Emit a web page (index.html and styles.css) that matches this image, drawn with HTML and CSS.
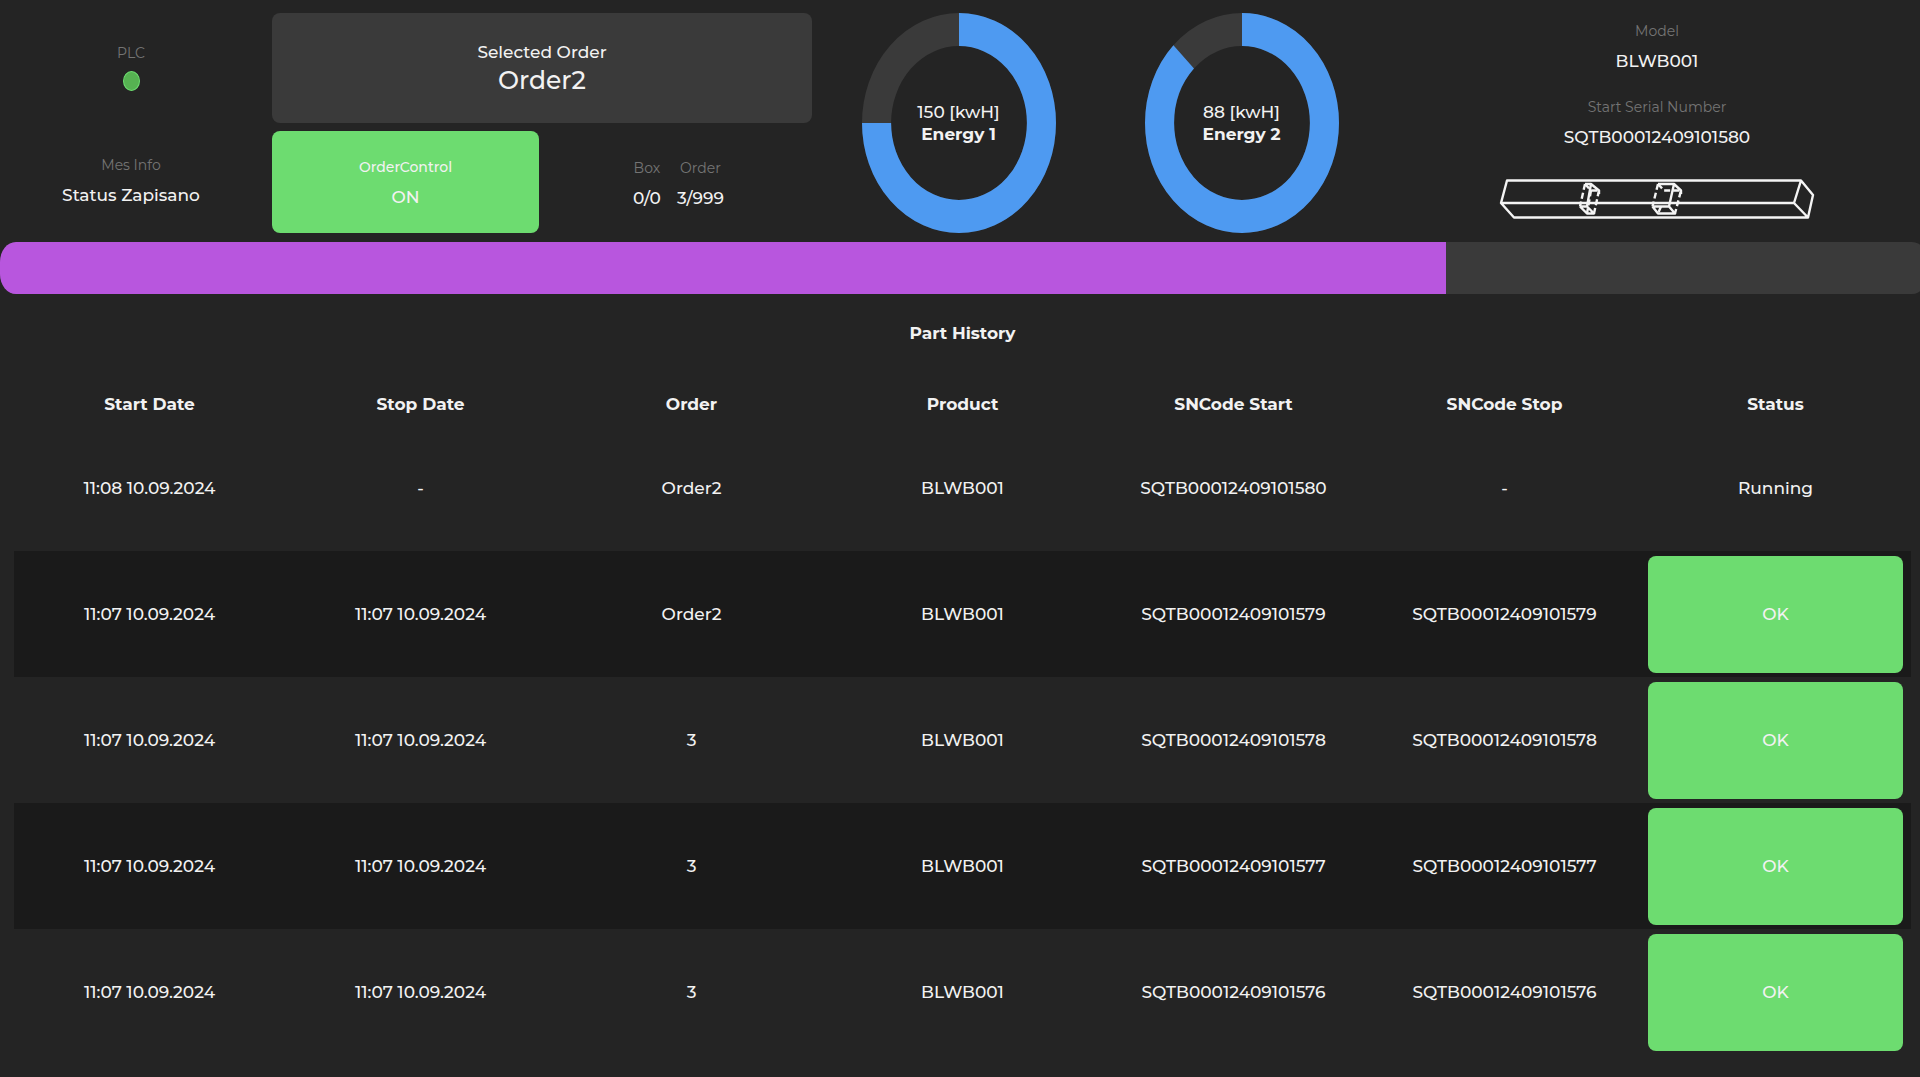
FILE: index.html
```html
<!DOCTYPE html>
<html lang="en">
<head>
<meta charset="utf-8">
<title>Production Line</title>
<meta name="viewport" content="width=device-width, initial-scale=1">
<link rel="stylesheet" href="styles.css">
</head>
<body>
<main class="screen">
  <header class="overview">
    <section class="machine">
      <div class="stat">
        <span class="label">PLC</span>
        <span class="led" role="img" aria-label="Connected"></span>
      </div>
      <div class="stat">
        <span class="label">Mes Info</span>
        <span class="value">Status Zapisano</span>
      </div>
    </section>

    <section class="order">
      <button class="order-card" type="button">
        <span class="order-caption">Selected Order</span>
        <span class="order-name">Order2</span>
      </button>
      <button class="toggle" type="button">
        <span class="toggle-label">OrderControl</span>
        <span class="toggle-state">ON</span>
      </button>
      <div class="counters">
        <div class="stat">
          <span class="label">Box</span>
          <span class="value">0/0</span>
        </div>
        <div class="stat">
          <span class="label">Order</span>
          <span class="value">3/999</span>
        </div>
      </div>
    </section>

    <section class="gauges">
      <div class="gauge">
        <svg class="ring" viewBox="0 0 100 100" preserveAspectRatio="none" aria-hidden="true">
          <circle class="ring-track" cx="50" cy="50" r="42.5"/>
          <circle class="ring-value" cx="50" cy="50" r="42.5" pathLength="100" stroke-dasharray="75 100" transform="rotate(-90 50 50)"/>
        </svg>
        <div class="gauge-text"><span>150 [kwH]</span><strong>Energy 1</strong></div>
      </div>
      <div class="gauge">
        <svg class="ring" viewBox="0 0 100 100" preserveAspectRatio="none" aria-hidden="true">
          <circle class="ring-track" cx="50" cy="50" r="42.5"/>
          <circle class="ring-value" cx="50" cy="50" r="42.5" pathLength="100" stroke-dasharray="87.5 100" transform="rotate(-90 50 50)"/>
        </svg>
        <div class="gauge-text"><span>88 [kwH]</span><strong>Energy 2</strong></div>
      </div>
    </section>

    <section class="model">
      <div class="stat">
        <span class="label">Model</span>
        <span class="value">BLWB001</span>
      </div>
      <div class="stat">
        <span class="label">Start Serial Number</span>
        <span class="value">SQTB00012409101580</span>
      </div>
      <svg class="profile" viewBox="0 0 316 42" aria-label="Profile with two cut-outs" role="img">
        <path d="M8 2.5H302L314 17L309 39.5H15L2 25ZM2 25H295L302 2.5M295 25L309 39.5"/>
        <path class="hole" d="M86 6H92L100 12.5V16M81 28.5H88L95 35.5H88L81 28.5M88 28.5L92 6"/>
        <path class="hidden-edge" d="M86 6L81 28.5M100 12.5L95 35.5M86 6L92 12.5H100M92 12.5L88 35.5"/>
        <path class="hole" d="M159 6H175L182 12.5V16M153.5 28.5H170L176 35.5H159L153.5 28.5M170 28.5L175 6"/>
        <path class="hidden-edge" d="M159 6L153.5 28.5M159 6L165 12.5H182L176 35.5M162 28.5L159 35.5"/>
      </svg>
    </section>
  </header>

  <div class="progress" role="progressbar" aria-label="Order progress" aria-valuenow="75" aria-valuemin="0" aria-valuemax="100">
    <div class="progress-fill" style="width: 75%"></div>
  </div>

  <section class="history">
    <h2 class="history-title">Part History</h2>
    <table class="parts">
      <thead>
        <tr><th>Start Date</th><th>Stop Date</th><th>Order</th><th>Product</th><th>SNCode Start</th><th>SNCode Stop</th><th>Status</th></tr>
      </thead>
      <tbody>
        <tr><td>11:08 10.09.2024</td><td>-</td><td>Order2</td><td>BLWB001</td><td>SQTB00012409101580</td><td>-</td><td>Running</td></tr>
        <tr><td>11:07 10.09.2024</td><td>11:07 10.09.2024</td><td>Order2</td><td>BLWB001</td><td>SQTB00012409101579</td><td>SQTB00012409101579</td><td class="action"><button class="ok" type="button">OK</button></td></tr>
        <tr><td>11:07 10.09.2024</td><td>11:07 10.09.2024</td><td>3</td><td>BLWB001</td><td>SQTB00012409101578</td><td>SQTB00012409101578</td><td class="action"><button class="ok" type="button">OK</button></td></tr>
        <tr><td>11:07 10.09.2024</td><td>11:07 10.09.2024</td><td>3</td><td>BLWB001</td><td>SQTB00012409101577</td><td>SQTB00012409101577</td><td class="action"><button class="ok" type="button">OK</button></td></tr>
        <tr><td>11:07 10.09.2024</td><td>11:07 10.09.2024</td><td>3</td><td>BLWB001</td><td>SQTB00012409101576</td><td>SQTB00012409101576</td><td class="action"><button class="ok" type="button">OK</button></td></tr>
      </tbody>
    </table>
  </section>
</main>
</body>
</html>
```

FILE: styles.css
```css
:root {
  --bg: #242424;
  --row-alt: #1a1a1a;
  --panel: #3a3a3a;
  --text: #f2f2f2;
  --muted: #747474;
  --green: #6ddc70;
  --blue: #4e9af1;
  --purple: #b856de;
}

* {
  box-sizing: border-box;
}

body {
  margin: 0;
  background: var(--bg);
  color: var(--text);
  font-family: Montserrat, Lato, "Open Sans", sans-serif;
  font-size: 17px;
  font-weight: 500;
  line-height: 24px;
}

button {
  border: 0;
  border-radius: 8px;
  color: inherit;
  font: inherit;
  cursor: pointer;
}

.screen {
  min-height: 100vh;
  overflow-x: hidden;
}

.overview {
  display: grid;
  grid-template-columns: 262fr 540fr 556fr 532fr;
  gap: 10px;
  padding-top: 13px;
}

.machine,
.order {
  display: grid;
  gap: 8px;
}

.machine {
  grid-template-rows: 106px 106px;
}

.stat {
  display: flex;
  flex-direction: column;
  align-items: center;
  justify-content: center;
  gap: 6px;
}

.label {
  color: var(--muted);
  font-size: 14px;
  font-weight: 400;
}

.led {
  width: 17px;
  height: 20px;
  border: 1px solid var(--green);
  border-radius: 50%;
  background: #56b252;
}

.order {
  grid-template-rows: 110px 102px;
  grid-template-columns: 1fr 1fr;
  column-gap: 6px;
}

.order-card,
.toggle {
  display: flex;
  flex-direction: column;
  align-items: center;
  justify-content: center;
}

.order-card {
  grid-column: 1 / -1;
  background: var(--panel);
}

.order-name {
  font-size: 25px;
  line-height: 32px;
}

.toggle {
  gap: 6px;
  background: var(--green);
}

.toggle-label {
  font-size: 14px;
}

.counters {
  display: flex;
  justify-content: center;
  gap: 16px;
  padding-top: 2px;
}

.gauges {
  display: grid;
  grid-template-columns: 1fr 1fr;
  gap: 10px;
}

.gauge {
  display: grid;
  place-items: center;
}

.gauge > * {
  grid-area: 1 / 1;
}

.ring {
  width: 194px;
  height: 220px;
}

.ring circle {
  fill: none;
  stroke-width: 15;
}

.ring .ring-track {
  stroke: var(--panel);
}

.ring .ring-value {
  stroke: var(--blue);
}

.gauge-text {
  display: flex;
  flex-direction: column;
  align-items: center;
  line-height: 22px;
}

.model {
  display: flex;
  flex-direction: column;
  align-items: center;
  gap: 22px;
  padding: 6px 0 0 6px;
}

.profile {
  width: 316px;
  height: 42px;
  margin-top: 7px;
  fill: none;
  stroke: #f4f4f4;
  stroke-width: 2.4;
  stroke-linejoin: round;
}

.profile .hidden-edge {
  stroke-dasharray: 6 3;
}

.progress {
  height: 52px;
  margin: 9px -8px 0 0;
  border-radius: 16px / 20px;
  overflow: hidden;
  background: var(--panel);
}

.progress-fill {
  height: 100%;
  background: var(--purple);
}

.history {
  padding: 27px 9px 21px 14px;
}

.history-title {
  margin: 0;
  font-size: 17px;
  font-weight: 700;
  text-align: center;
}

.parts {
  width: 100%;
  margin-top: 37px;
  border-collapse: collapse;
  table-layout: fixed;
  text-align: center;
}

.parts th {
  height: 43px;
  padding: 0;
  font-weight: 700;
}

.parts td {
  height: 126px;
  padding: 0;
}

.parts tbody tr:nth-child(even) {
  background: var(--row-alt);
}

.parts .action {
  padding: 4px 8px;
}

.ok {
  display: block;
  width: 100%;
  height: 117px;
  background: var(--green);
}
```
